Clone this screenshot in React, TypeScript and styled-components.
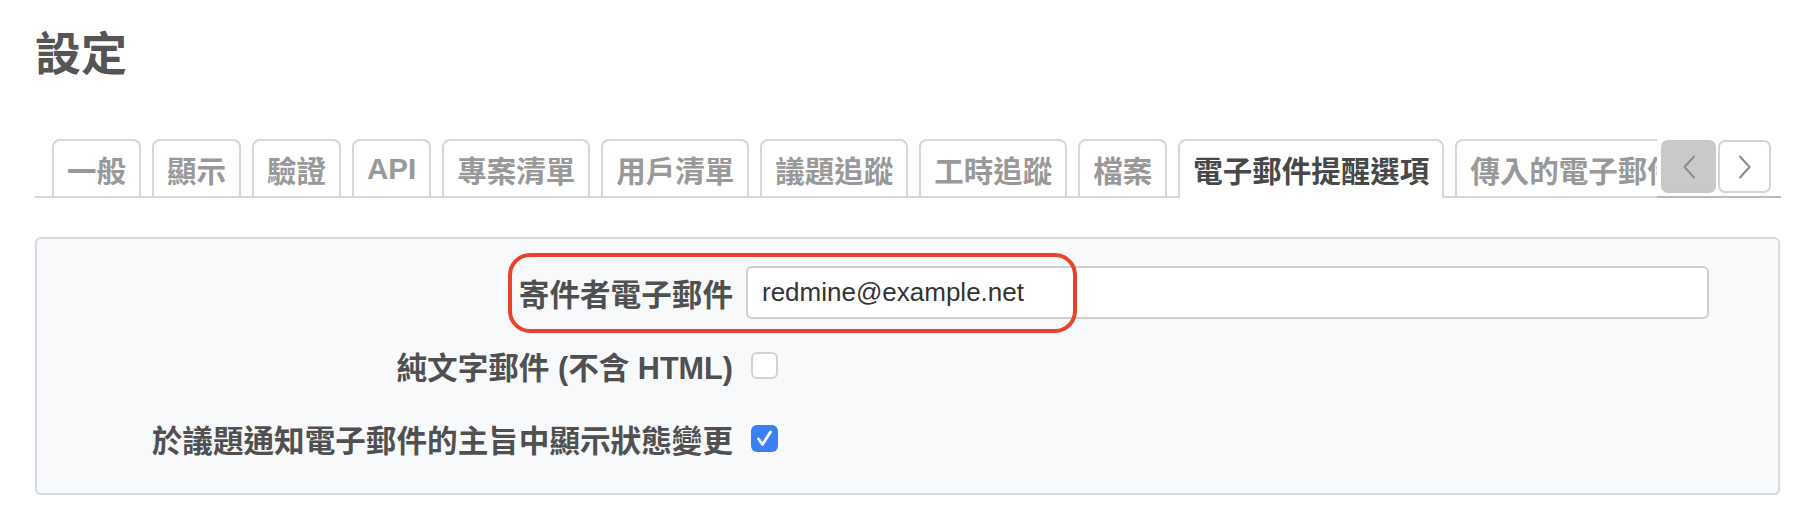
import React from 'react';
import styled, { createGlobalStyle } from 'styled-components';

const GlobalStyle = createGlobalStyle`
  html, body {
    margin: 0;
    padding: 0;
    background: #fff;
  }
  body {
    font-family: "Liberation Sans", "Noto Sans CJK TC", sans-serif;
    color: #505050;
  }
`;

const Page = styled.div`
  padding: 26px 29px 0 35px;
`;

const Title = styled.h2`
  margin: 0;
  font-size: 46px;
  line-height: 56px;
  font-weight: 700;
  color: #555;
`;

// tab strip
const Tabs = styled.div`
  position: relative;
  margin-top: 57px;
  border-bottom: 2px solid #d3d8de;
`;

const TabList = styled.ul`
  display: flex;
  align-items: flex-start;
  gap: 11px;
  margin: 0 0 -2px;
  padding: 0 0 0 17px;
  list-style: none;
  overflow: hidden;
  white-space: nowrap;
`;

const Tab = styled.li<{ $active?: boolean }>`
  box-sizing: border-box;
  flex-shrink: 0;
  display: flex;
  align-items: center;
  height: ${p => (p.$active ? 59 : 57)}px;
  padding: 0 13px ${p => (p.$active ? 2 : 0)}px;
  border: 2px solid #d3d8de;
  border-bottom: 0;
  border-radius: 8px 8px 0 0;
  background: #fff;
  font-size: 29.5px;
  font-weight: 700;
  color: ${p => (p.$active ? '#484848' : '#999')};
`;

const TabButtons = styled.div`
  position: absolute;
  right: 0;
  bottom: -2px;
  box-sizing: border-box;
  width: 124px;
  height: 59px;
  display: flex;
  align-items: flex-end;
  gap: 2px;
  padding: 0 10px 3px 4px;
  background: #fff;
  border-bottom: 2px solid #bbb;
`;

const ScrollButton = styled.button<{ $pressed?: boolean }>`
  box-sizing: border-box;
  width: ${p => (p.$pressed ? 55 : 53)}px;
  height: 53px;
  padding: 0;
  display: flex;
  align-items: center;
  justify-content: center;
  border: 2px solid ${p => (p.$pressed ? '#c8c8c8' : '#d4d4d4')};
  border-radius: 7px;
  background: ${p => (p.$pressed ? '#c9c9c9' : '#fff')};
`;

// settings box
const Box = styled.div`
  margin-top: 39px;
  margin-right: 1px;
  display: flex;
  flex-direction: column;
  gap: 20px;
  padding: 27px 0 28px;
  background: #f8f9fb;
  border: 2px solid #d6dbe1;
  border-radius: 6px;
  box-shadow: 0 1px 2px rgba(0, 0, 0, 0.08);
`;

const Row = styled.div`
  position: relative;
  display: grid;
  grid-template-columns: 696px 1fr;
  column-gap: 13px;
  align-items: center;
  min-height: 53px;
`;

const Label = styled.label`
  text-align: right;
  font-size: 30.6px;
  font-weight: 700;
  color: #505050;
  white-space: nowrap;
`;

const TextInput = styled.input`
  box-sizing: border-box;
  width: 963px;
  height: 53px;
  padding: 0 14px;
  border: 2px solid #cfcfcf;
  border-radius: 6px;
  background: #fff;
  font-family: "Liberation Sans", sans-serif;
  font-size: 26px;
  color: #333;
  outline: none;
`;

const Check = styled.span<{ $checked?: boolean }>`
  box-sizing: border-box;
  display: flex;
  align-items: center;
  justify-content: center;
  width: 27px;
  height: 27px;
  margin-left: 5px;
  border-radius: 6px;
  border: ${p => (p.$checked ? '0' : '2px solid #d2d2d2')};
  background: ${p => (p.$checked ? '#3b7ff5' : '#fff')};
`;

const Highlight = styled.div`
  position: absolute;
  left: 471px;
  top: -13px;
  box-sizing: border-box;
  width: 569px;
  height: 80px;
  border: 4px solid #e8432b;
  border-radius: 22px;
  pointer-events: none;
`;

const TABS = [
  '一般',
  '顯示',
  '驗證',
  'API',
  '專案清單',
  '用戶清單',
  '議題追蹤',
  '工時追蹤',
  '檔案',
  '電子郵件提醒選項',
  '傳入的電子郵件',
];

const Chevron = ({ dir }: { dir: 'left' | 'right' }) => (
  <svg width="14" height="24" viewBox="0 0 14 24" fill="none">
    <polyline
      points={dir === 'left' ? '12,1.5 2.5,12 12,22.5' : '2,1.5 11.5,12 2,22.5'}
      stroke="#8c8c8c"
      strokeWidth="2"
      strokeLinecap="round"
      strokeLinejoin="round"
    />
  </svg>
);

const CheckBox = ({ checked }: { checked?: boolean }) => (
  <Check $checked={checked}>
    {checked && (
      <svg width="21" height="21" viewBox="0 0 21 21" fill="none">
        <polyline
          points="4.5,11 8.5,16.5 16.5,4"
          stroke="#fff"
          strokeWidth="2.8"
          strokeLinecap="round"
          strokeLinejoin="round"
        />
      </svg>
    )}
  </Check>
);

export default function App() {
  return (
    <>
      <GlobalStyle />
      <Page>
        <Title>設定</Title>

        <Tabs>
          <TabList>
            {TABS.map(t => (
              <Tab key={t} $active={t === '電子郵件提醒選項'}>
                {t}
              </Tab>
            ))}
          </TabList>
          <TabButtons>
            <ScrollButton $pressed>
              <Chevron dir="left" />
            </ScrollButton>
            <ScrollButton>
              <Chevron dir="right" />
            </ScrollButton>
          </TabButtons>
        </Tabs>

        <Box>
          <Row>
            <Label>寄件者電子郵件</Label>
            <div>
              <TextInput value="redmine@example.net" readOnly />
            </div>
            <Highlight />
          </Row>
          <Row>
            <Label>純文字郵件 (不含 HTML)</Label>
            <CheckBox />
          </Row>
          <Row>
            <Label>於議題通知電子郵件的主旨中顯示狀態變更</Label>
            <CheckBox checked />
          </Row>
        </Box>
      </Page>
    </>
  );
}
